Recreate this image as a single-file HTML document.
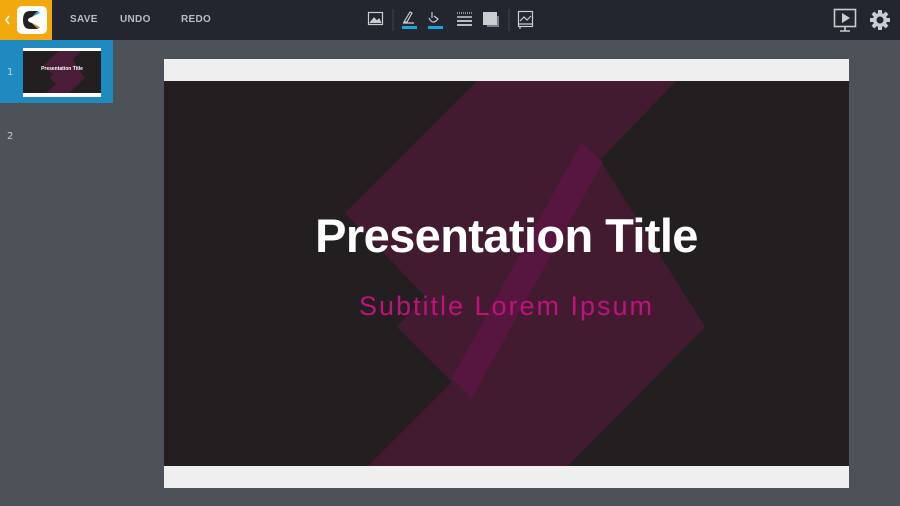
<!DOCTYPE html>
<html><head><style>
*{margin:0;padding:0;box-sizing:border-box}
body{width:900px;height:506px;overflow:hidden;background:#4d5158;font-family:"Liberation Sans",sans-serif;position:relative}
.top{position:absolute;left:0;top:0;width:900px;height:40px;background:#23262e}
.logo{position:absolute;left:0;top:0;width:52px;height:40px;background:#f1a90d}
.lbl{position:absolute;top:14px;font-size:10px;font-weight:bold;color:#b9bcc2;letter-spacing:.3px}
.sel{position:absolute;left:0;top:40px;width:113px;height:63px;background:#1f8ac0}
.num{position:absolute;font-size:10px;color:#c8ccd2;font-family:"DejaVu Sans",sans-serif}
.slide{position:absolute;left:164px;top:59px;width:685px;height:429px;background:#efefef}
.ic{position:absolute;top:0}
.t{position:absolute;left:0;width:685px;text-align:center;white-space:nowrap}
</style></head><body>
<div class="top"></div>
<div class="logo">
<svg width="52" height="40" viewBox="0 0 52 40">
<path d="M9 16 L6 20 L9 24" stroke="#fff" stroke-width="1.6" fill="none"/>
<rect x="17" y="6" width="30" height="28" rx="5" fill="#fff"/>
<path d="M38 11 L30 11 Q23 11 23 20 Q23 29 30 29 L38 29 L32 23 Q28 22 28 20 Q28 18 32 17 Z" fill="#222"/>
<path d="M38 11 L32 17 L40 13 Z" fill="#2bb0e8"/>
<path d="M38 29 L32 23 L40 27 Z" fill="#f08020"/>
</svg></div>
<div class="lbl" style="left:70px">SAVE</div>
<div class="lbl" style="left:120px">UNDO</div>
<div class="lbl" style="left:181px">REDO</div>
<svg class="ic" width="900" height="40" style="left:0">
<g fill="none" stroke="#c9ccd1" stroke-width="1.2">
<rect x="368.5" y="12.5" width="14" height="12"/>
<path d="M370 23 L374 18 L377 21 L379 19 L381 23" fill="#c9ccd1"/>
<line x1="393" y1="9" x2="393" y2="31" stroke="#3a3e46"/>
<path d="M404 22 L410 12 L412 13 L407 22 Z M403 23 L414 23"/>
<path d="M432 12 L432 18 M429 18 Q432 24 436 21 L438 19 L434 16"/>
<line x1="457" y1="13" x2="472" y2="13" stroke-dasharray="1 1"/>
<line x1="457" y1="17" x2="472" y2="17" stroke-width="1.5"/>
<line x1="457" y1="21" x2="472" y2="21" stroke-width="1.8"/>
<line x1="457" y1="25" x2="472" y2="25" stroke-width="1.8"/>
<line x1="509" y1="9" x2="509" y2="31" stroke="#3a3e46"/>
<rect x="518.5" y="11.5" width="14" height="15"/>
<path d="M520 21 L524 17 L527 20 L531 16" />
<path d="M518 24 L533 24 M520 27 L520 29"/>
<rect x="834.5" y="9.5" width="21" height="17" stroke-width="1.6"/>
<path d="M845 27 L845 31 M840 31 L850 31" stroke-width="1.6"/>
</g>
<rect x="402" y="26" width="15" height="3" fill="#1aa4e0"/>
<rect x="428" y="26" width="15" height="3" fill="#1aa4e0"/>
<rect x="483" y="12" width="14" height="13" fill="#c9ccd1"/>
<path d="M497 16 L499 16 L499 27 L487 27 L487 25 L497 25 Z" fill="#7a7d83"/>
<path d="M842 13 L850 18 L842 23 Z" fill="#c9ccd1"/>
<g transform="translate(880,20)" fill="#c9ccd1">
<circle r="7"/>
<rect x="-2" y="-10" width="4" height="20"/><rect x="-10" y="-2" width="20" height="4"/>
<rect x="-2" y="-10" width="4" height="20" transform="rotate(45)"/><rect x="-2" y="-10" width="4" height="20" transform="rotate(-45)"/>
<circle r="3.5" fill="#23262e"/>
</g>
</svg>
<div class="sel"></div>
<div class="num" style="left:7px;top:67px">1</div>
<div class="num" style="left:7px;top:131px">2</div>
<div style="position:absolute;left:23px;top:48px;width:78px;height:49px;background:#fff">
 <div style="position:absolute;left:0;top:3px;width:78px;height:42px;background:#231f20;overflow:hidden">
  <svg width="78" height="42" viewBox="164 81 685 385" preserveAspectRatio="none" style="position:absolute;left:0;top:0">
   <polygon fill="#4a1c38" points="478,80 677,80 600,160 705,327 567,467 367,467 452,382 397,327 425,296 345,213"/>
  </svg>
  <div style="position:absolute;left:0;top:15px;width:78px;text-align:center;color:#fff;font-size:5px;font-weight:bold">Presentation Title</div>
 </div>
</div>
<div class="slide">
 <div style="position:absolute;left:0;top:22px;width:685px;height:385px;background:#231f20;overflow:hidden">
  <svg width="685" height="385" viewBox="164 81 685 385" style="position:absolute;left:0;top:0">
   <polygon fill="#421b30" points="478,80 677,80 600,160 705,327 567,467 367,467 452,382 397,327 425,296 345,213"/>
   <polygon fill="#57163f" points="581,143 603,162 472,398 452,378"/>
  </svg>
  <div class="t" style="top:131px;color:#fff;font-size:47px;line-height:47px;font-weight:bold;letter-spacing:-0.6px">Presentation Title</div>
  <div class="t" style="top:212px;color:#c0127a;font-size:27px;line-height:27px;letter-spacing:2px">Subtitle Lorem Ipsum</div>
 </div>
</div>
</body></html>
